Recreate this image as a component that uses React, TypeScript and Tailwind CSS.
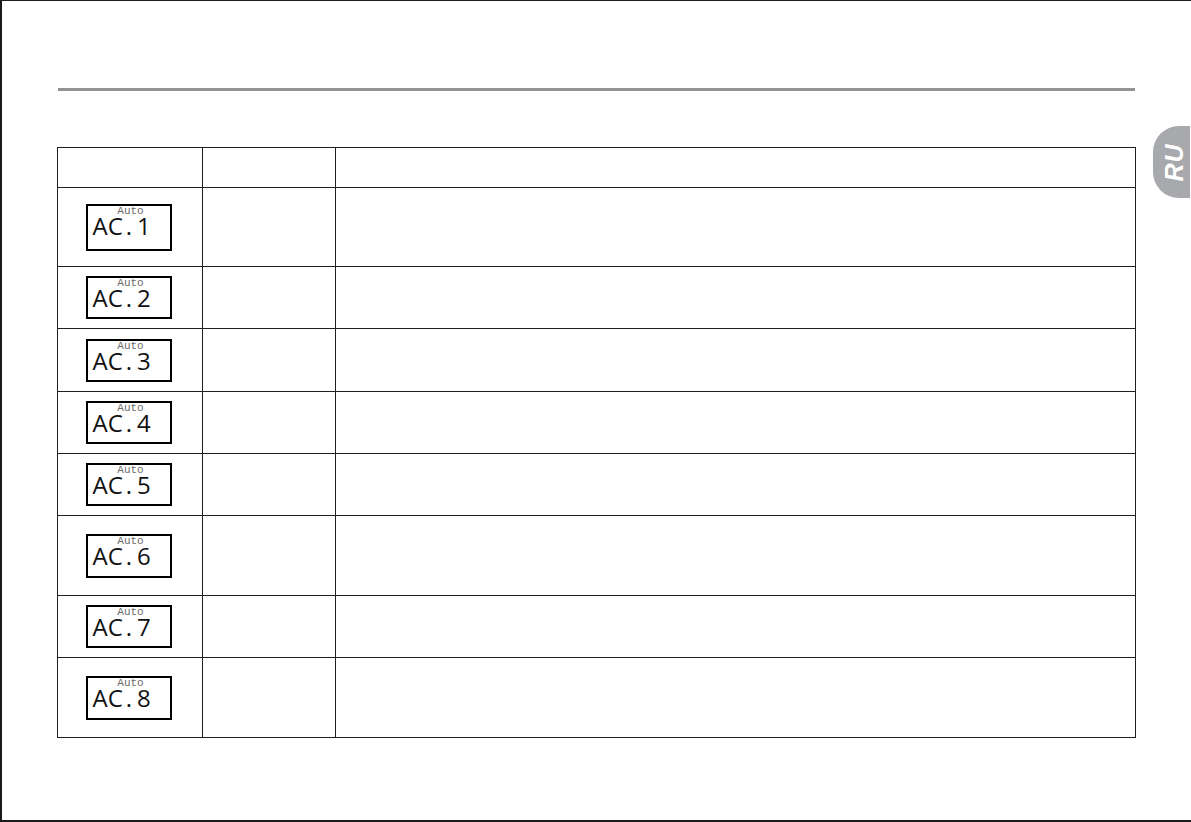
import React from 'react';

interface Row {
    label: string;
    height: string;
    boxHeight: string;
}

const rows: Row[] = [
    { label: '1', height: 'h-[79px]', boxHeight: 'h-[47px]' },
    { label: '2', height: 'h-[62px]', boxHeight: 'h-[43px]' },
    { label: '3', height: 'h-[63px]', boxHeight: 'h-[43px]' },
    { label: '4', height: 'h-[62px]', boxHeight: 'h-[43px]' },
    { label: '5', height: 'h-[62px]', boxHeight: 'h-[43px]' },
    { label: '6', height: 'h-[80px]', boxHeight: 'h-[44px]' },
    { label: '7', height: 'h-[62px]', boxHeight: 'h-[43px]' },
    { label: '8', height: 'h-[80px]', boxHeight: 'h-[44px]' },
];

const LcdBox: React.FC<{ label: string; boxHeight: string }> = ({ label, boxHeight }) => (
    <div className={`w-[86px] ${boxHeight} border-2 border-black flex flex-col`}>
        <span className="self-center ml-[4px] text-[11px] leading-[11px] text-[#6a6a6a] font-['Liberation_Mono',monospace]">
            Auto
        </span>
        <span className="pl-[5px] text-[24px] leading-[18px] text-[#111] font-['Open_Sans',sans-serif]">
            AC<span className="ml-[3px] mr-[5px]">.</span>
            {label}
        </span>
    </div>
);

const App: React.FC = () => {
    return (
        <div className="w-[1191px] h-[822px] bg-white relative overflow-hidden border-t border-l-2 border-b-2 border-[#1a1a1a]">
            <div className="pt-[87px] pl-[56px]">
                <div className="w-[1077px] h-[3px] bg-[#939393]" />
            </div>

            <div className="pt-[56px] pl-[55px]">
                <div className="w-[1079px] border-r border-b border-[#1f1f1f]">
                    {/* header */}
                    <div className="flex h-[40px]">
                        <div className="w-[145px] border-l border-t border-[#1f1f1f]" />
                        <div className="w-[133px] border-l border-t border-[#1f1f1f]" />
                        <div className="flex-1 border-l border-t border-[#1f1f1f]" />
                    </div>
                    {rows.map((row) => (
                        <div key={row.label} className={`flex ${row.height}`}>
                            <div className="w-[145px] border-l border-t border-[#1f1f1f] flex items-center justify-center pr-[3px]">
                                <LcdBox label={row.label} boxHeight={row.boxHeight} />
                            </div>
                            <div className="w-[133px] border-l border-t border-[#1f1f1f]" />
                            <div className="flex-1 border-l border-t border-[#1f1f1f]" />
                        </div>
                    ))}
                </div>
            </div>

            {/* language tab */}
            <div className="absolute left-[1151px] top-[125px] w-[37px] h-[72px] bg-[#a7a9ac] rounded-l-[26px] flex items-center justify-center">
                <span className="-rotate-90 text-white text-[25px] leading-none font-bold italic tracking-[1px] font-['Liberation_Sans',sans-serif] ml-[6px]">
                    RU
                </span>
            </div>
        </div>
    );
};

export default App;
